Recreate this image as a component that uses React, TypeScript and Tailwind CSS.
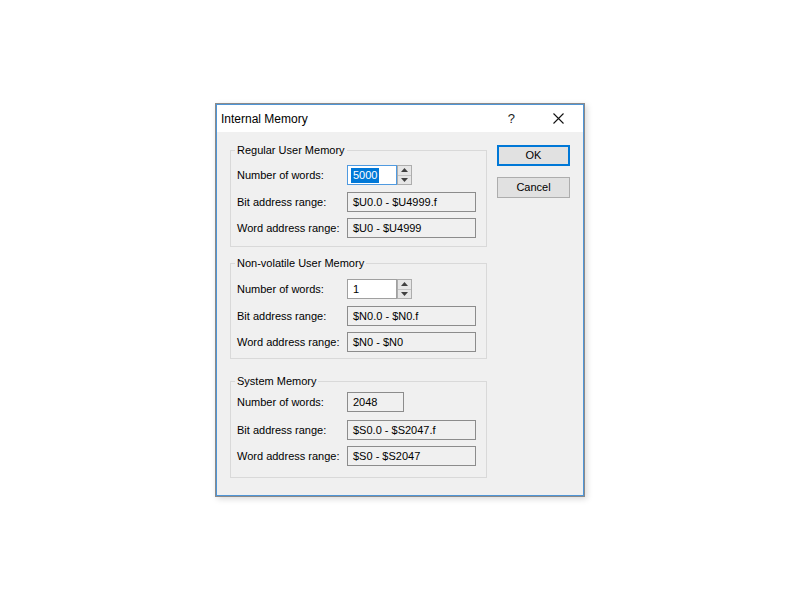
import type { ReactNode } from "react";

type Row = { label: string; kind: "spin" | "box" | "short"; value: string; focused?: boolean };

type Group = {
  title: string;
  mt: string;
  pt: string;
  pb: string;
  gaps: string[];
  rows: Row[];
};

const groups: Group[] = [
  {
    title: "Regular User Memory",
    mt: "mt-0",
    pt: "pt-[8px]",
    pb: "pb-[8px]",
    gaps: ["mt-0", "mt-[7px]", "mt-[6px]"],
    rows: [
      { label: "Number of words:", kind: "spin", value: "5000", focused: true },
      { label: "Bit address range:", kind: "box", value: "$U0.0 - $U4999.f" },
      { label: "Word address range:", kind: "box", value: "$U0 - $U4999" },
    ],
  },
  {
    title: "Non-volatile User Memory",
    mt: "mt-[10px]",
    pt: "pt-[9px]",
    pb: "pb-[6px]",
    gaps: ["mt-0", "mt-[7px]", "mt-[6px]"],
    rows: [
      { label: "Number of words:", kind: "spin", value: "1" },
      { label: "Bit address range:", kind: "box", value: "$N0.0 - $N0.f" },
      { label: "Word address range:", kind: "box", value: "$N0 - $N0" },
    ],
  },
  {
    title: "System Memory",
    mt: "mt-[16px]",
    pt: "pt-[4px]",
    pb: "pb-[11px]",
    gaps: ["mt-0", "mt-[8px]", "mt-[6px]"],
    rows: [
      { label: "Number of words:", kind: "short", value: "2048" },
      { label: "Bit address range:", kind: "box", value: "$S0.0 - $S2047.f" },
      { label: "Word address range:", kind: "box", value: "$S0 - $S2047" },
    ],
  },
];

function SpinButtons() {
  return (
    <div className="flex h-[20px] w-[15px] flex-col border border-[#adadad] bg-[#e6e6e6]">
      <div className="flex flex-1 items-center justify-center border-b border-[#c4c4c4]">
        <svg width="7" height="4" viewBox="0 0 7 4">
          <path d="M0 4 L3.5 0 L7 4 Z" fill="#404040" />
        </svg>
      </div>
      <div className="flex flex-1 items-center justify-center">
        <svg width="7" height="4" viewBox="0 0 7 4">
          <path d="M0 0 L3.5 4 L7 0 Z" fill="#404040" />
        </svg>
      </div>
    </div>
  );
}

function Field({ row }: { row: Row }) {
  if (row.kind === "spin") {
    return (
      <div className="flex h-[20px] items-center">
        <div
          className={
            row.focused
              ? "flex h-[20px] w-[50px] items-center border border-[#4f9ae0] bg-white pl-[3px]"
              : "flex h-[20px] w-[50px] items-center border border-[#a0a0a0] bg-white pl-[5px]"
          }
        >
          {row.focused ? (
            <span className="bg-[#0078d7] px-[2px] leading-[15px] text-white">{row.value}</span>
          ) : (
            <span>{row.value}</span>
          )}
        </div>
        <SpinButtons />
      </div>
    );
  }
  return (
    <div
      className={
        (row.kind === "short" ? "w-[57px]" : "w-[129px]") +
        " flex h-[20px] items-center border border-[#8c8c8c] bg-[#f0f0f0] pl-[5px]"
      }
    >
      {row.value}
    </div>
  );
}

function GroupBox({ g }: { g: Group }) {
  return (
    <fieldset className={`${g.mt} ${g.pt} ${g.pb} w-[257px] border border-[#d9d9d9] pl-[6px]`}>
      <legend className="-ml-[2px] px-[2px] leading-[13px]">{g.title}</legend>
      {g.rows.map((r, i) => (
        <div key={r.label} className={`${g.gaps[i]} flex h-[20px] items-center`}>
          <div className="w-[110px]">{r.label}</div>
          <Field row={r} />
        </div>
      ))}
    </fieldset>
  );
}

function Button({ children, primary }: { children: ReactNode; primary?: boolean }) {
  return (
    <div
      className={
        primary
          ? "flex h-[21px] w-[73px] items-center justify-center border-2 border-[#0078d7] bg-[#e1e1e1]"
          : "flex h-[21px] w-[73px] items-center justify-center border border-[#adadad] bg-[#e1e1e1]"
      }
    >
      {children}
    </div>
  );
}

export default function App() {
  return (
    <div
      className="h-[600px] w-[800px] bg-white pl-[215px] pt-[103px] text-[11px] text-black"
      style={{ fontFamily: '"Liberation Sans", Arial, sans-serif' }}
    >
      <div className="flex h-[394px] w-[370px] flex-col border border-[#8a8a8a] shadow-[2px_2px_6px_rgba(0,0,0,0.15)]">
        <div className="flex flex-1 flex-col border border-[#4f95d6]">
          <div className="flex h-[27px] items-center bg-white pl-[4px]">
            <span className="text-[12px]">Internal Memory</span>
            <span className="ml-auto mr-[38px] text-[13px] text-[#222]">?</span>
            <svg width="11" height="11" viewBox="0 0 11 11" className="mr-[19px]">
              <path d="M0.5 0.5 L10.5 10.5 M10.5 0.5 L0.5 10.5" stroke="#111" strokeWidth="1.1" />
            </svg>
          </div>
          <div className="flex flex-1 bg-[#f0f0f0] pl-[13px] pt-[12px]">
            <div className="flex flex-col">
              {groups.map((g) => (
                <GroupBox key={g.title} g={g} />
              ))}
            </div>
            <div className="ml-[10px] flex flex-col pt-[1px]">
              <Button primary>OK</Button>
              <div className="mt-[11px]">
                <Button>Cancel</Button>
              </div>
            </div>
          </div>
        </div>
      </div>
    </div>
  );
}
